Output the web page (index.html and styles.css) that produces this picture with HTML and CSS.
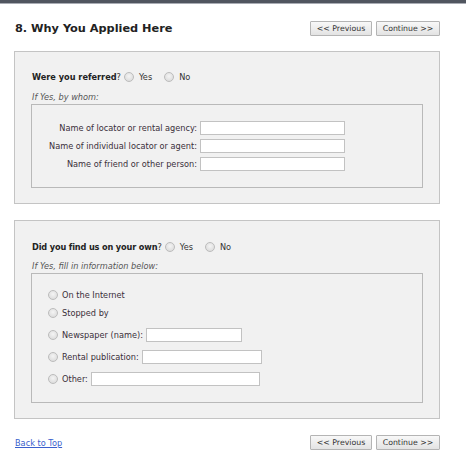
FILE: index.html
```html
<!DOCTYPE html>
<html>
<head>
<meta charset="utf-8">
<link rel="stylesheet" href="styles.css">
</head>
<body>
<div class="topbar"></div>
<div class="page">
  <div class="header">
    <h1 class="title">8. Why You Applied Here</h1>
    <div class="nav">
      <button class="btn btn-prev">&lt;&lt; Previous</button>
      <button class="btn btn-next">Continue &gt;&gt;</button>
    </div>
  </div>

  <div class="box box-first">
    <div class="question"><b>Were you referred</b>?<input type="radio" name="ref" class="radio"><span class="opt">Yes</span><input type="radio" name="ref" class="radio radio-gap"><span class="opt">No</span></div>
    <div class="hint">If Yes, by whom:</div>
    <div class="inner inner-grid">
      <label class="lbl">Name of locator or rental agency:</label><input type="text" class="field">
      <label class="lbl">Name of individual locator or agent:</label><input type="text" class="field">
      <label class="lbl">Name of friend or other person:</label><input type="text" class="field">
    </div>
  </div>

  <div class="box box-second">
    <div class="question"><b class="tight">Did you find us on your own</b>?<input type="radio" name="own" class="radio"><span class="opt">Yes</span><input type="radio" name="own" class="radio radio-gap"><span class="opt">No</span></div>
    <div class="hint hint-2">If Yes, fill in information below:</div>
    <div class="inner inner-list">
      <div class="item"><input type="radio" name="src" class="radio"><span class="itxt">On the Internet</span></div>
      <div class="item"><input type="radio" name="src" class="radio"><span class="itxt">Stopped by</span></div>
      <div class="item item-field"><input type="radio" name="src" class="radio"><span class="itxt">Newspaper (name):</span><input type="text" class="field f-news"></div>
      <div class="item item-field"><input type="radio" name="src" class="radio"><span class="itxt">Rental publication:</span><input type="text" class="field f-rental"></div>
      <div class="item item-field"><input type="radio" name="src" class="radio"><span class="itxt">Other:</span><input type="text" class="field f-other"></div>
    </div>
  </div>

  <div class="footer">
    <a href="#" class="toplink">Back to Top</a>
    <div class="nav">
      <button class="btn btn-prev">&lt;&lt; Previous</button>
      <button class="btn btn-next">Continue &gt;&gt;</button>
    </div>
  </div>
</div>
</body>
</html>
```

FILE: styles.css
```css
html, body {
  margin: 0;
  padding: 0;
  background: #ffffff;
}
body {
  font-family: "DejaVu Sans", Verdana, sans-serif;
  font-size: 8.2px;
  color: #333;
}
.topbar {
  height: 3px;
  background: #50555f;
  border-bottom: 1px solid #a9acb4;
}
.page {
  width: 426px;
  margin-left: 14px;
}
.header {
  display: flex;
  justify-content: space-between;
  align-items: center;
  height: 20px;
  margin-top: 14px;
}
.title {
  margin: 0 0 0 1px;
  font-size: 11.3px;
  font-weight: bold;
  color: #222;
}
.nav {
  display: flex;
  gap: 4px;
}
.btn {
  font-family: "DejaVu Sans", Verdana, sans-serif;
  font-size: 7.8px;
  color: #333;
  height: 15px;
  padding: 0;
  border: 1px solid #b4b4b4;
  border-radius: 1px;
  background: linear-gradient(#f8f8f8, #e3e3e3);
}
.btn-prev { width: 62px; }
.btn-next { width: 64px; }

.box {
  background: #f1f1f1;
  border: 1px solid #c4c4c4;
  padding: 19px 16px 15px 16px;
}
.box-first {
  margin-top: 13px;
}
.box-second {
  margin-top: 16px;
  padding-top: 20px;
}
.question {
  display: flex;
  align-items: center;
  height: 12px;
  padding-left: 1px;
  color: #333;
}
.question b {
  color: #222;
}
.question .tight {
  letter-spacing: -0.15px;
}
.radio {
  appearance: none;
  -webkit-appearance: none;
  width: 10px;
  height: 10px;
  margin: 0;
  border: 1px solid #bcbcbc;
  border-radius: 50%;
  background: radial-gradient(circle at 50% 40%, #f4f4f4, #d6d6d6);
  flex: none;
}
.question .radio {
  margin-left: 3px;
}
.question .radio-gap {
  margin-left: 12px;
}
.opt {
  margin-left: 5px;
}
.hint {
  margin-top: 8px;
  height: 12px;
  line-height: 12px;
  padding-left: 1px;
  font-style: italic;
  color: #555;
}
.hint-2 {
  margin-top: 7px;
}
.inner {
  border: 1px solid #b9b9b9;
  margin-top: 1px;
}
.inner-grid {
  display: grid;
  grid-template-columns: 164px 145px;
  column-gap: 3px;
  row-gap: 4px;
  padding: 16px 0 16px 1px;
  align-items: center;
}
.lbl {
  text-align: right;
  color: #3a2f3a;
  white-space: nowrap;
}
.field {
  height: 14px;
  box-sizing: border-box;
  margin: 0;
  padding: 0 2px;
  border: 1px solid #c2c2c2;
  background: #fff;
  font-size: 8px;
}
.inner-grid .field {
  width: 145px;
}
.inner-list {
  padding: 14px 0 16px 16px;
  display: flex;
  flex-direction: column;
  gap: 4px;
}
.item {
  display: flex;
  align-items: center;
  height: 14px;
}
.item-field {
  margin-top: 4px;
}
.itxt {
  margin-left: 4px;
  color: #3a2f3a;
}
.item .field {
  margin-left: 3px;
}
.f-news { width: 96px; }
.f-rental { width: 120px; }
.f-other { width: 169px; }

.footer {
  display: flex;
  justify-content: space-between;
  align-items: center;
  margin-top: 16px;
}
.toplink {
  margin-left: 1px;
  color: #3a5fcd;
  text-decoration: underline;
}
```
